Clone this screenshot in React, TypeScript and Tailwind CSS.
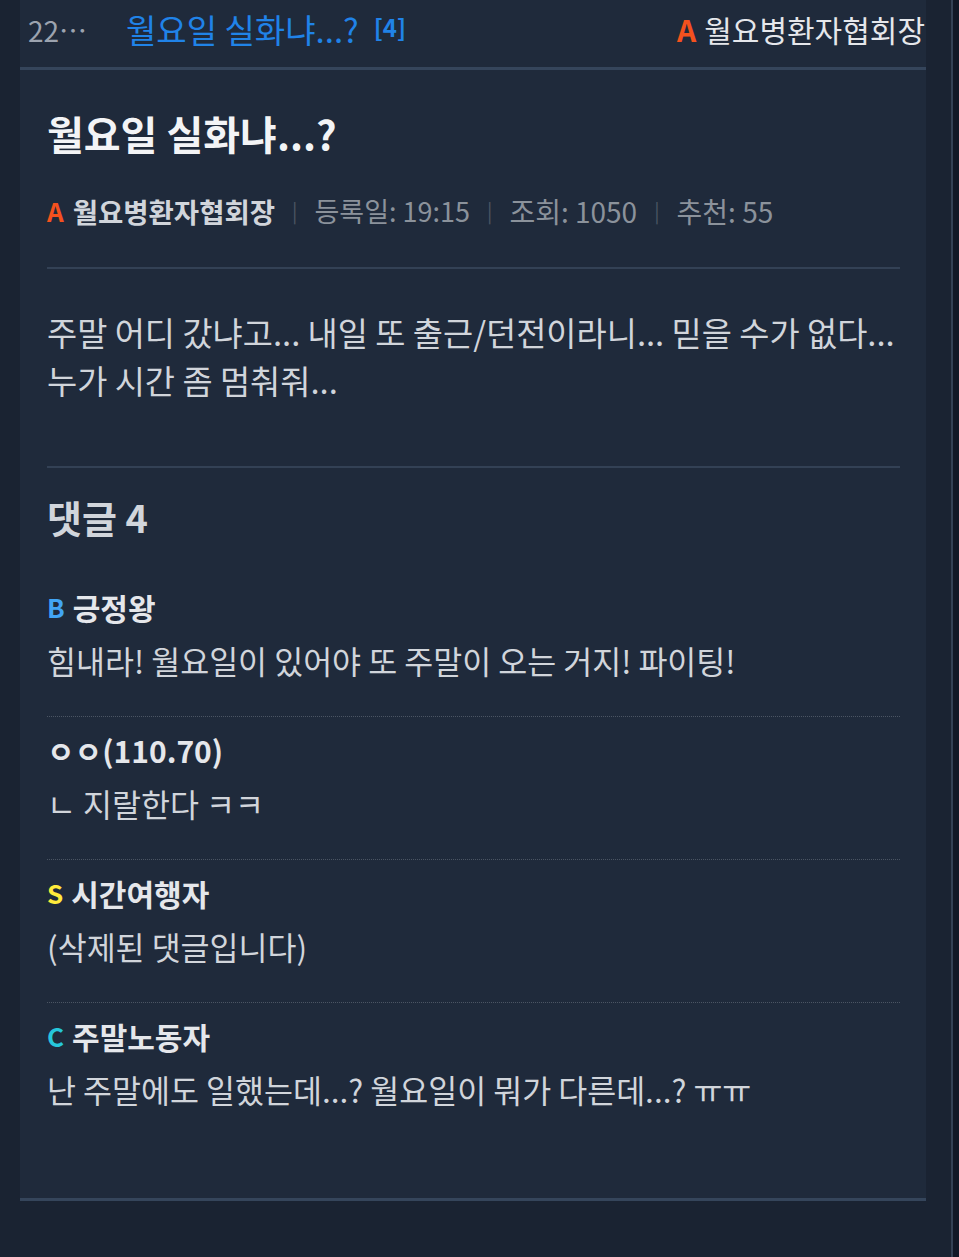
const font = { fontFamily: '"Noto Sans CJK KR", "Noto Sans", sans-serif' };

type Comment = {
  grade?: string;
  gradeColor?: string;
  name: string;
  text: string;
};

const comments: Comment[] = [
  { grade: "B", gradeColor: "text-[#42a5f5]", name: "긍정왕", text: "힘내라! 월요일이 있어야 또 주말이 오는 거지! 파이팅!" },
  { name: "ㅇㅇ(110.70)", text: "ㄴ 지랄한다 ㅋㅋ" },
  { grade: "S", gradeColor: "text-[#ffeb3b]", name: "시간여행자", text: "(삭제된 댓글입니다)" },
  { grade: "C", gradeColor: "text-[#26c6da]", name: "주말노동자", text: "난 주말에도 일했는데...? 월요일이 뭐가 다른데...? ㅠㅠ" },
];

const Sep = () => <span className="mx-[17px] text-[20px] text-[#4b5563]">|</span>;

export default function App() {
  return (
    <div style={font} className="flex min-h-screen bg-[#111827]">
      <div className="w-[953px] shrink-0 border-r-2 border-[#334155] bg-[#1a2332] pb-[57px]">
        <div className="ml-[20px] w-[906px] border-b-[3px] border-[#35455b] bg-[#1f2a3b]">
          {/* list row */}
          <div className="flex h-[70px] items-center border-b-[3px] border-[#35455b] pb-[8px] pl-[8px] pr-[1px]">
            <span className="w-[98px] text-[28px] text-[#9ca3af]">22…</span>
            <span className="whitespace-nowrap text-[33px] text-[#2083e8]">월요일 실화냐...?</span>
            <span className="ml-[15px] -mt-[6px] text-[24px] font-bold text-[#2083e8]">[4]</span>
            <span className="ml-auto flex items-center whitespace-nowrap text-[30px] text-[#e5e7eb]">
              <span className="mr-[8px] font-bold text-[#f4511e]">A</span>
              월요병환자협회장
            </span>
          </div>

          <div className="pl-[27px] pr-[26px] pb-[53px]">
            <h1 className="pt-[38px] text-[40px] font-bold leading-[50px] text-[#f3f4f6]">월요일 실화냐...?</h1>

            <div className="mt-[35px] flex items-center whitespace-nowrap leading-[36px] border-b-2 border-[#334155] pb-[38px]">
              <span className="mr-[9px] text-[26px] font-bold text-[#f4511e]">A</span>
              <span className="text-[27.5px] font-bold text-[#d1d5db]">월요병환자협회장</span>
              <Sep />
              <span className="text-[27px] text-[#8b929b]">등록일: 19:15</span>
              <Sep />
              <span className="text-[28px] text-[#8b929b]">조회: 1050</span>
              <Sep />
              <span className="text-[28px] text-[#8b929b]">추천: 55</span>
            </div>

            <div className="border-b-2 border-[#334155] pt-[39px] pb-[62px] text-[32.8px] leading-[48px] text-[#d1d5db]">
              <div className="whitespace-nowrap">주말 어디 갔냐고... 내일 또 출근/던전이라니... 믿을 수가 없다...</div>
              <div className="whitespace-nowrap">누가 시간 좀 멈춰줘...</div>
            </div>

            <h2 className="mt-[27px] text-[38px] font-bold leading-[44px] text-[#d1d5db]">댓글 4</h2>

            <div className="mt-[35px]">
              {comments.map((c, i) => (
                <div
                  key={i}
                  className={
                    i < comments.length - 1
                      ? "border-b border-dotted border-[#4b5563] pt-[15px] pb-[36px]"
                      : "pt-[15px] pb-[36px]"
                  }
                >
                  <div className="flex items-center whitespace-nowrap text-[30px] font-bold leading-[36px] text-[#e5e7eb]">
                    {c.grade && <span className={`mr-[8px] text-[26px] ${c.gradeColor}`}>{c.grade}</span>}
                    {c.name}
                  </div>
                  <p className="mt-[15px] whitespace-nowrap text-[31.5px] leading-[40px] text-[#d1d5db]">{c.text}</p>
                </div>
              ))}
            </div>
          </div>
        </div>
      </div>
    </div>
  );
}
